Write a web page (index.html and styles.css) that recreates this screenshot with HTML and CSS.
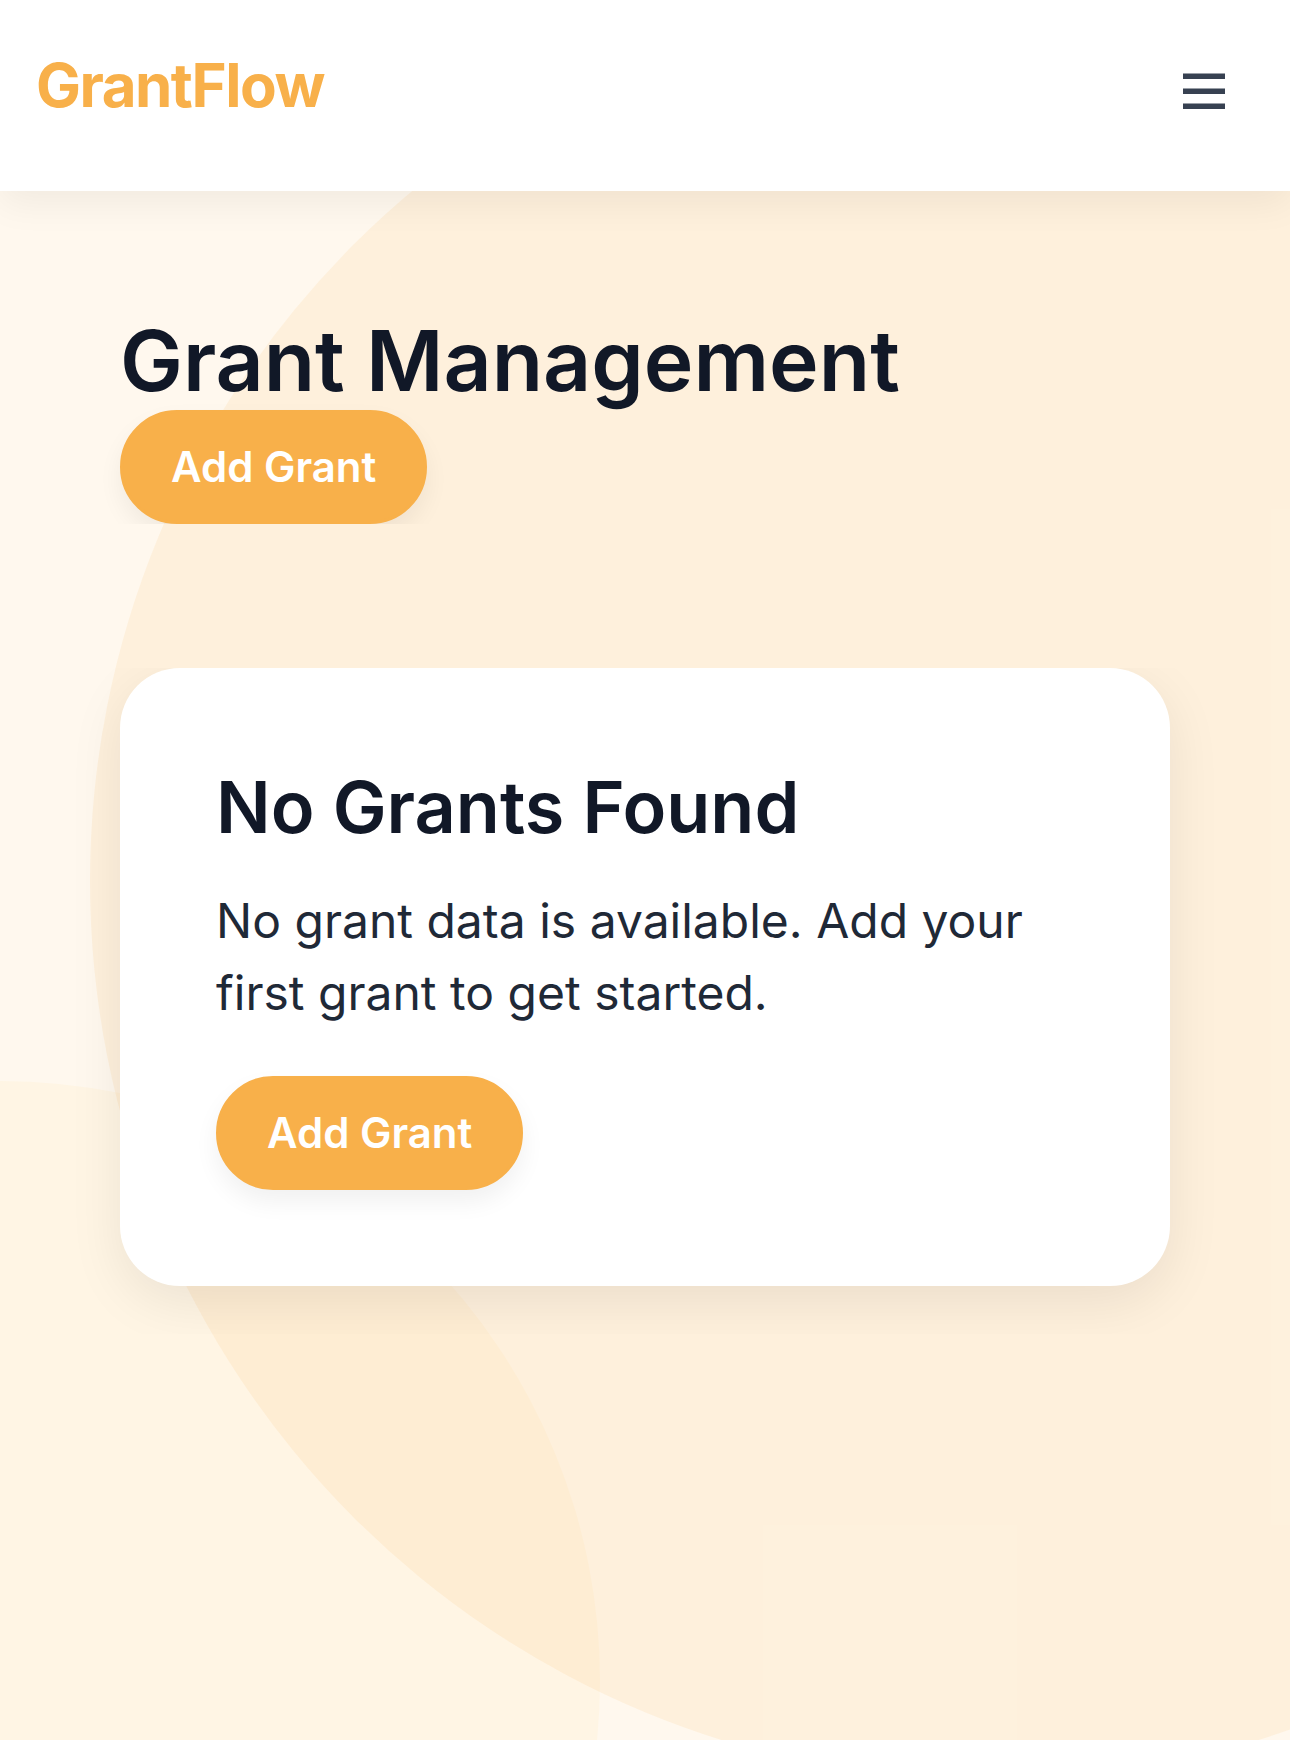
FILE: index.html
```html
<!DOCTYPE html>
<html lang="en">
<head>
  <meta charset="utf-8">
  <meta name="viewport" content="width=device-width, initial-scale=1">
  <title>GrantFlow</title>
  <link rel="stylesheet" href="styles.css">
</head>
<body>
  <div class="page">
    <div class="backdrop" aria-hidden="true">
      <span class="circle circle-large"></span>
      <span class="circle circle-small"></span>
    </div>
    <header class="site-header">
      <a class="logo" href="#">GrantFlow</a>
      <button class="menu-button" type="button" aria-label="Open menu">
        <svg class="menu-icon" viewBox="0 0 42 36" aria-hidden="true">
          <path d="M0 0.5h42v5.5H0zM0 15.5h42v5.5H0zM0 30.5h42v5.5H0z"/>
        </svg>
      </button>
    </header>
    <main class="content">
      <section class="page-title">
        <h1>Grant Management</h1>
        <button class="button" type="button">Add Grant</button>
      </section>
      <section class="grants">
        <div class="card">
          <h2>No Grants Found</h2>
          <p>No grant data is available. Add your first grant to get started.</p>
          <button class="button" type="button">Add Grant</button>
        </div>
      </section>
    </main>
  </div>
</body>
</html>
```
FILE: styles.css
```css
* {
  box-sizing: border-box;
}

body {
  margin: 0;
  font-family: Inter, "Liberation Sans", sans-serif;
  color: #1f2937;
  background: #fff8ee;
}

h1,
h2,
p {
  margin: 0;
}

.page {
  position: relative;
  min-height: 100vh;
  isolation: isolate;
}

/* Decorative circles behind the content */
.backdrop {
  position: absolute;
  inset: 0;
  z-index: -1;
  overflow: hidden;
}

.circle {
  position: absolute;
  border-radius: 50%;
}

.circle-large {
  top: -19px;
  right: -600px;
  width: 1800px;
  height: 1800px;
  background: rgba(248, 178, 68, 0.1);
}

.circle-small {
  bottom: -541px;
  left: -600px;
  width: 1200px;
  height: 1200px;
  background: rgba(251, 188, 58, 0.05);
}

.site-header {
  display: flex;
  align-items: flex-start;
  justify-content: space-between;
  padding: 42px 36px 51px;
  background: #fff;
  box-shadow: 0 12px 36px rgba(0, 0, 0, 0.06);
}

.logo {
  font-size: 60px;
  font-weight: 700;
  line-height: 87px;
  letter-spacing: -0.025em;
  color: #f8b04a;
  text-decoration: none;
}

.menu-button {
  display: grid;
  place-items: center;
  width: 100px;
  height: 98px;
  padding: 0;
  border: 0;
  background: none;
  color: #374151;
  cursor: pointer;
}

.menu-icon {
  width: 42px;
  height: 36px;
  fill: currentColor;
}

.content {
  display: flex;
  flex-direction: column;
  gap: 144px;
  padding: 120px 120px 48px;
}

.page-title,
.grants {
  overflow-y: clip;
}

h1,
h2 {
  font-weight: 600;
  color: #111827;
}

h1 {
  font-size: 84px;
  line-height: 99px;
}

h2 {
  font-size: 72px;
  line-height: 86px;
}

.grants {
  padding-bottom: 48px;
}

.card {
  display: flex;
  flex-direction: column;
  align-items: flex-start;
  padding: 96px;
  border-radius: 60px;
  background: #fff;
  box-shadow: 0 16px 54px rgba(0, 0, 0, 0.08);
}

.card p {
  margin: 35px 0 47px;
  font-size: 48px;
  line-height: 72px;
}

.button {
  display: block;
  padding: 24px 48px;
  border: 3px solid #f8b04a;
  border-radius: 57px;
  background: #f8b04a;
  box-shadow: 0 12px 24px rgba(0, 0, 0, 0.06);
  font-family: inherit;
  font-size: 42px;
  font-weight: 600;
  line-height: 60px;
  color: #fff;
  cursor: pointer;
}
```
